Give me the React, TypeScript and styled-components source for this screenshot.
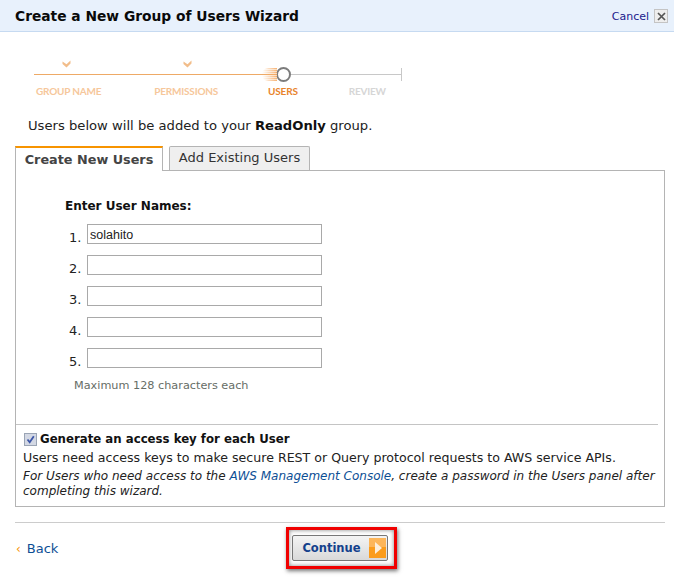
import React from "react";
import styled, { createGlobalStyle } from "styled-components";

const Global = createGlobalStyle`
  html, body { margin: 0; padding: 0; background: #fff; }
  body { font-family: "DejaVu Sans", Verdana, sans-serif; color: #111; width: 674px; height: 582px; overflow: hidden; }
`;

const Page = styled.div`
  width: 674px;
  height: 582px;
  display: flex;
  flex-direction: column;
`;

const Header = styled.header`
  height: 31px;
  box-sizing: content-box;
  background: #e8f1fc;
  border-bottom: 1px solid #c6daf1;
  display: flex;
  align-items: center;
  justify-content: space-between;
  padding: 0 6px 0 15px;
`;

const Title = styled.h1`
  margin: 1px 0 0;
  font-size: 13.8px;
  font-weight: 700;
  color: #0a0a0a;
`;

const CancelWrap = styled.div`
  display: flex;
  align-items: center;
  gap: 5px;
  color: #1a1a8c;
  font-size: 11px;
  margin-top: 1px;
`;

const CloseBox = styled.span`
  width: 12px;
  height: 12px;
  border: 1px solid #c4c4c4;
  background: #eeeeee;
  display: flex;
  align-items: center;
  justify-content: center;
`;

const Stepper = styled.div`
  padding: 25px 0 0 34px;
  display: flex;
  flex-direction: column;
`;

const Checks = styled.div`
  height: 10px;
  display: flex;
`;

const Check = styled.svg<{ $offset: number }>`
  margin-left: ${(p) => p.$offset}px;
  width: 9px;
  height: 8px;
  margin-top: 3px;
`;

const Track = styled.div`
  height: 15px;
  display: flex;
  align-items: center;
`;

const Segment = styled.div<{ $done?: boolean; $w: number }>`
  height: 1px;
  border-top: 1px solid ${(p) => (p.$done ? "#eeaa66" : "#c8c8c8")};
  width: ${(p) => p.$w}px;
`;

const Ring = styled.div`
  position: relative;
  width: 11px;
  height: 11px;
  border: 2px solid #7c7c7c;
  border-radius: 50%;
  background: #fff;
  flex: none;
  &::before {
    content: "";
    position: absolute;
    right: 12px;
    top: -1px;
    width: 15px;
    height: 13px;
    background: repeating-linear-gradient(0deg, rgba(255,255,255,0) 0 1px, rgba(255,255,255,.55) 1px 2px),
      linear-gradient(90deg, rgba(245,170,100,0), rgba(245,170,100,.9));
    border-radius: 6px 0 0 6px;
  }
`;

const EndTick = styled.div`
  width: 1px;
  height: 13px;
  background: #c8c8c8;
`;

const Labels = styled.div`
  display: flex;
  margin-top: 3px;
  height: 12px;
  align-items: center;
`;

const StepLabel = styled.span<{ $color: string; $offset: number }>`
  font-family: Lato, "Open Sans", sans-serif;
  font-size: 10px;
  letter-spacing: -0.2px;
  font-weight: 700;
  line-height: 12px;
  color: ${(p) => p.$color};
  margin-left: ${(p) => p.$offset}px;
  white-space: nowrap;
`;

const Intro = styled.p`
  margin: 0;
  padding: 20px 0 0 28px;
  font-size: 13.15px;
  line-height: 18px;
  color: #222;
`;

const Strong = styled.b`
  font-weight: 700;
  color: #111;
`;

const Tabs = styled.div`
  display: flex;
  align-items: flex-start;
  margin: 11px 0 0 15px;
  height: 24px;
  gap: 6px;
  position: relative;
  z-index: 1;
`;

const ActiveTab = styled.div`
  width: 148px;
  height: 25px;
  box-sizing: border-box;
  border: 1px solid #b4b4b4;
  border-top: 2px solid #f79400;
  border-bottom: 0;
  background: #fff;
  font-size: 12.8px;
  font-weight: 700;
  color: #444;
  line-height: 23px;
  text-align: center;
`;

const Tab = styled.div`
  width: 141px;
  height: 24px;
  box-sizing: border-box;
  border: 1px solid #b4b4b4;
  border-bottom: 0;
  border-radius: 2px 2px 0 0;
  background: #efefef;
  font-size: 13px;
  color: #333;
  line-height: 22px;
  text-align: center;
`;

const Panel = styled.div`
  margin: 0 9px 0 15px;
  height: 337px;
  box-sizing: border-box;
  border: 1px solid #b4b4b4;
  display: flex;
  flex-direction: column;
`;

const NamesArea = styled.div`
  height: 226px;
  padding: 27px 0 0 49px;
  flex: none;
`;

const NamesTitle = styled.div`
  font-size: 12px;
  font-weight: 700;
  line-height: 16px;
  color: #111;
  margin-bottom: 10px;
`;

const NameRow = styled.div`
  display: flex;
  align-items: flex-start;
  height: 20px;
  margin-bottom: 11px;
`;

const RowNum = styled.span`
  width: 21px;
  margin-left: 4px;
  font-size: 13px;
  line-height: 16px;
  padding-top: 6px;
  color: #222;
`;

const NameInput = styled.input`
  width: 235px;
  height: 20px;
  box-sizing: border-box;
  border: 1px solid #a9a9a9;
  padding: 2px 1px 0 2px;
  margin: 0 0 0 -3px;
  font-family: "Liberation Sans", Arial, sans-serif;
  font-size: 12.5px;
  color: #222;
  background: #fff;
  outline: none;
`;

const Hint = styled.div`
  font-size: 11.25px;
  line-height: 14px;
  margin: 1px 0 0 9px;
  color: #666d66;
`;

const Options = styled.div`
  margin-right: 6px;
  border-top: 1px solid #c4c4c4;
  padding: 5px 0 0 7px;
`;

const OptionHead = styled.label`
  display: flex;
  align-items: center;
  gap: 3px;
  font-size: 11.75px;
  font-weight: 700;
  line-height: 18px;
  color: #111;
`;

const CheckMark = styled.span`
  width: 13px;
  height: 13px;
  box-sizing: border-box;
  border: 1px solid #9aa4b4;
  background: #d3d8e4;
  display: flex;
  align-items: center;
  justify-content: center;
  margin-left: 1px;
`;

const Desc = styled.div`
  font-size: 12.6px;
  line-height: 19px;
  color: #222;
  white-space: nowrap;
`;

const Note = styled.div`
  font-size: 12px;
  font-style: italic;
  line-height: 15px;
  color: #222;
  margin-top: 2px;
  width: 640px;
`;

const InlineLink = styled.a`
  color: #0d4f95;
`;

const Footer = styled.footer`
  margin: 15px 9px 0 15px;
  border-top: 1px solid #cccccc;
  height: 50px;
  display: flex;
  align-items: flex-start;
`;

const Back = styled.div`
  display: flex;
  align-items: center;
  gap: 6px;
  margin-top: 16px;
  font-size: 13px;
  line-height: 20px;
  color: #0d4f95;
`;

const Caret = styled.span`
  color: #f79400;
  font-size: 12px;
  line-height: 20px;
  margin-left: 1px;
`;

const Highlight = styled.div`
  margin: 4px 0 0 228px;
  width: 111px;
  height: 42px;
  box-sizing: border-box;
  border: 3px solid #f00000;
  box-shadow: 1px 2px 4px rgba(0, 0, 0, 0.55), inset 0 0 4px rgba(0, 0, 0, 0.5);
  display: flex;
  align-items: center;
  justify-content: center;
  padding-right: 3px;
  flex: none;
`;

const ContinueButton = styled.button`
  width: 96px;
  height: 26px;
  flex: none;
  box-sizing: border-box;
  border: 1px solid #777;
  border-radius: 2px;
  background: linear-gradient(180deg, #f4f4f4, #d9d9d9);
  display: flex;
  align-items: center;
  gap: 8px;
  padding: 0 0 0 9px;
  font-family: "DejaVu Sans", Verdana, sans-serif;
  font-size: 11.5px;
  font-weight: 700;
  color: #13418c;
`;

const ArrowIcon = styled.svg`
  width: 17px;
  height: 20px;
  flex: none;
`;

const CheckGlyph = ({ offset }: { offset: number }) => (
  <Check $offset={offset} viewBox="0 0 9 8">
    <path d="M0.5 1.5 L4.5 4.2 L8.5 0.5 L8.5 3.5 L4.5 7.5 L0.5 4 Z" fill="#f2bd8a" />
  </Check>
);

export default function App() {
  return (
    <Page>
      <Global />
      <Header>
        <Title>Create a New Group of Users Wizard</Title>
        <CancelWrap>
          Cancel
          <CloseBox>
            <svg width="9" height="9" viewBox="0 0 9 9">
              <path d="M1 1 L8 8 M8 1 L1 8" stroke="#555" strokeWidth="1.7" />
            </svg>
          </CloseBox>
        </CancelWrap>
      </Header>
      <Stepper>
        <Checks>
          <CheckGlyph offset={28} />
          <CheckGlyph offset={112} />
        </Checks>
        <Track>
          <Segment $done $w={242} />
          <Ring />
          <Segment $w={110} />
          <EndTick />
        </Track>
        <Labels>
          <StepLabel $color="#f6c79b" $offset={2}>GROUP NAME</StepLabel>
          <StepLabel $color="#f6c79b" $offset={53}>PERMISSIONS</StepLabel>
          <StepLabel $color="#e8842c" $offset={50}>USERS</StepLabel>
          <StepLabel $color="#d6d6d6" $offset={51}>REVIEW</StepLabel>
        </Labels>
      </Stepper>
      <Intro>
        Users below will be added to your <Strong>ReadOnly</Strong> group.
      </Intro>
      <Tabs>
        <ActiveTab>Create New Users</ActiveTab>
        <Tab>Add Existing Users</Tab>
      </Tabs>
      <Panel>
        <NamesArea>
          <NamesTitle>Enter User Names:</NamesTitle>
          {["solahito", "", "", "", ""].map((v, i) => (
            <NameRow key={i}>
              <RowNum>{i + 1}.</RowNum>
              <NameInput defaultValue={v} />
            </NameRow>
          ))}
          <Hint>Maximum 128 characters each</Hint>
        </NamesArea>
        <Options>
          <OptionHead>
            <CheckMark>
              <svg width="9" height="9" viewBox="0 0 9 9">
                <path d="M1.5 4.5 L3.7 7.2 L7.8 1.2" stroke="#3d57a8" strokeWidth="1.8" fill="none" />
              </svg>
            </CheckMark>
            Generate an access key for each User
          </OptionHead>
          <Desc>Users need access keys to make secure REST or Query protocol requests to AWS service APIs.</Desc>
          <Note>
            For Users who need access to the <InlineLink>AWS Management Console</InlineLink>, create a password in the Users panel after completing this wizard.
          </Note>
        </Options>
      </Panel>
      <Footer>
        <Back>
          <Caret>‹</Caret>
          Back
        </Back>
        <Highlight>
          <ContinueButton>
            Continue
            <ArrowIcon viewBox="0 0 17 20">
              <rect width="17" height="20" fill="#fb9c1c" />
              <rect width="17" height="9" fill="#fdb65a" />
              <path d="M6 4 L13 10 L6 16 Z" fill="#fdeeda" />
            </ArrowIcon>
          </ContinueButton>
        </Highlight>
      </Footer>
    </Page>
  );
}
